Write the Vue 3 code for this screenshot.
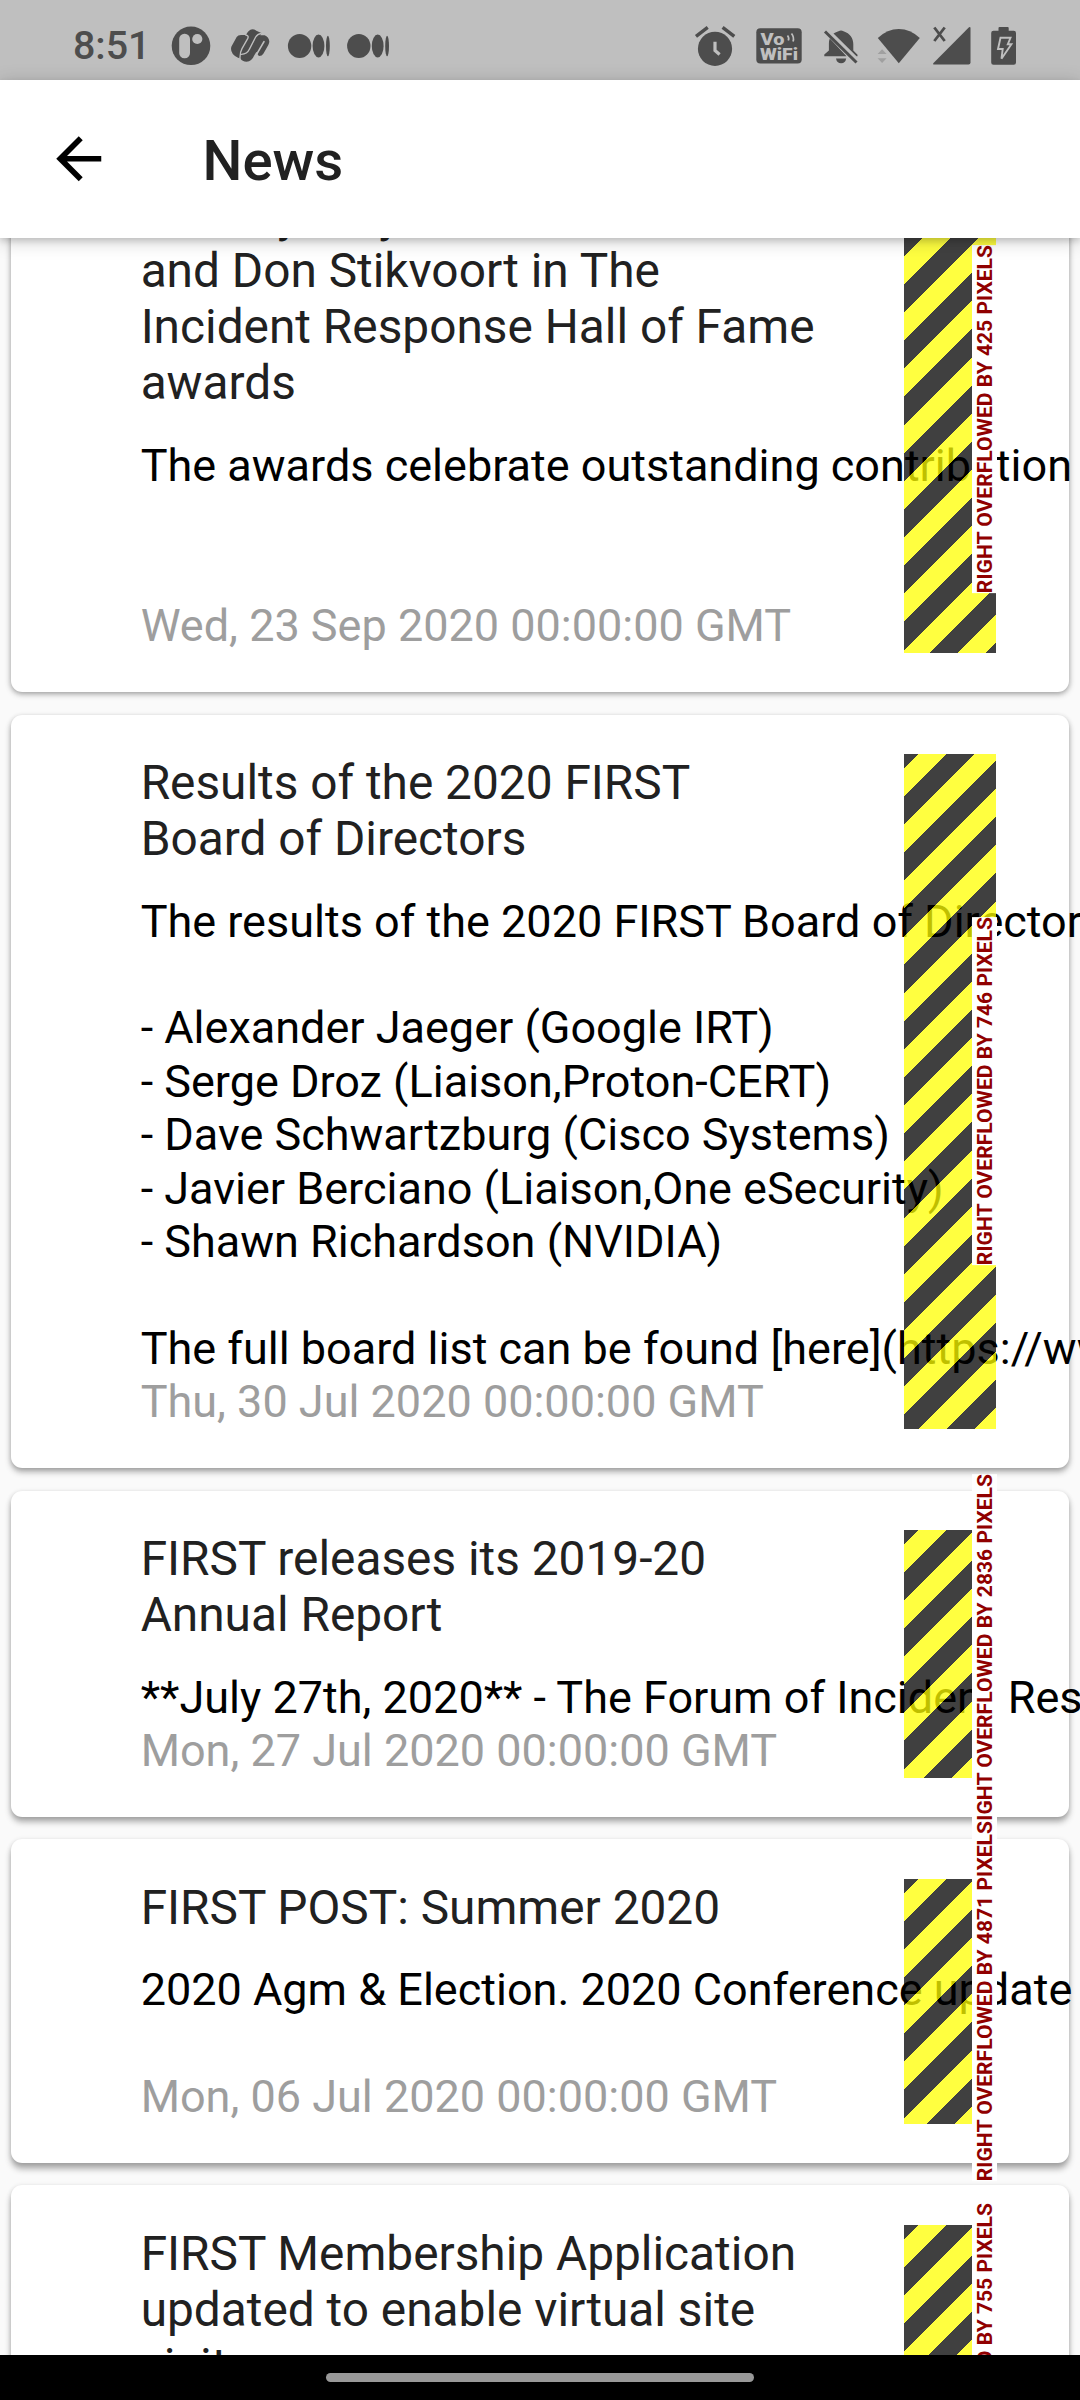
<script setup>
const articles = [
  {
    title: 'FIRST yearly\nand Don Stikvoort in The\nIncident Response Hall of Fame\nawards',
    body: 'The awards celebrate outstanding contribution\n\n\u00a0',
    date: 'Wed, 23 Sep 2020 00:00:00 GMT',
    overflow: 425,
    depth: 2,
  },
  {
    title: 'Results of the 2020 FIRST\nBoard of Directors',
    body: 'The results of the 2020 FIRST Board of Directors\n\n- Alexander Jaeger (Google IRT)\n- Serge Droz (Liaison,Proton-CERT)\n- Dave Schwartzburg (Cisco Systems)\n- Javier Berciano (Liaison,One eSecurity)\n- Shawn Richardson (NVIDIA)\n\nThe full board list can be found [here](https://www',
    date: 'Thu, 30 Jul 2020 00:00:00 GMT',
    overflow: 746,
    depth: 4,
  },
  {
    title: 'FIRST releases its 2019-20\nAnnual Report',
    body: '**July 27th, 2020** - The Forum of Incident Response',
    date: 'Mon, 27 Jul 2020 00:00:00 GMT',
    overflow: 2836,
    depth: 5,
  },
  {
    title: 'FIRST POST: Summer 2020',
    body: '2020 Agm & Election. 2020 Conference update\n\u00a0',
    date: 'Mon, 06 Jul 2020 00:00:00 GMT',
    overflow: 4871,
    depth: 6,
  },
  {
    title: 'FIRST Membership Application\nupdated to enable virtual site\nvisits',
    body: '\u00a0',
    date: '\u00a0',
    overflow: 755,
    depth: 6,
  },
]
</script>

<template>
  <div class="screen">
    <header class="status">
      <span class="clock">8:51</span>
      <svg class="status-icons" viewBox="160 0 920 80" width="920" height="80" fill="#4d4d4d">
        <circle cx="191" cy="45.8" r="19.3" />
        <rect x="179.2" y="33.8" width="10.8" height="24.5" rx="5.2" fill="#bfbfbf" />
        <circle cx="197.3" cy="39" r="5.1" fill="#bfbfbf" />

        <g transform="translate(220 20) scale(0.3333)">
          <path d="M34 80L50 51Q54 45 63 45H78Q85 30 97 28Q104 28 109 32L124 39L121 46H134Q146 50 148 64Q148 69 145 75L130 101Q126 108 118 108Q111 106 114 99L109 96L103 106Q95 125 80 125Q66 124 62 116Q45 110 38 101Q31 93 34 80Z" />
          <path d="M76 45Q88 46 83 56L66 86Q59 98 60 118M124 40Q112 42 107 51L88 88Q81 104 62 103" fill="none" stroke="#bfbfbf" stroke-width="4" />
          <path d="M132 65L111 101" fill="none" stroke="#bfbfbf" stroke-width="5" stroke-linecap="round" />
        </g>

        <g v-for="dx in [0, 59.2]" :key="dx" :transform="`translate(${dx} 0)`">
          <ellipse cx="299.6" cy="46" rx="11.7" ry="12.1" />
          <ellipse cx="318.5" cy="46" rx="5.9" ry="11.4" />
          <ellipse cx="327.9" cy="46" rx="1.9" ry="10.3" />
        </g>

        <circle cx="715" cy="48.8" r="17.1" />
        <path d="M696 36.3l11.7-9M734.3 36.3l-11.7-9" fill="none" stroke="#4d4d4d" stroke-width="3.4" />
        <path d="M715 41.8v8.7l4.6 4" fill="none" stroke="#bfbfbf" stroke-width="3.2" />

        <rect x="756.3" y="28.3" width="45.4" height="35.2" rx="4" />
        <g fill="#bfbfbf" class="vowifi">
          <text x="760.5" y="44.6" textLength="24" lengthAdjust="spacingAndGlyphs">Vo</text>
          <text x="760" y="60.3" textLength="38" lengthAdjust="spacingAndGlyphs">WiFi</text>
        </g>
        <path d="M787.5 35.5q2 2.5 .8 5M791.5 33.5q3 4 1.5 8" fill="none" stroke="#bfbfbf" stroke-width="1.7" />

        <path d="M833.5 33.6q2.5-1.8 5-2.4q2.500-1.600 5 0c6.500 2 9.800 7 9.800 13v6.300l4.200 4.200v1.600h-1zM829.800 38.500q-1 2.500-.9 5v7l-4.600 4v1.700h22.200z" />
        <path d="M836 58.600h10.200q-.800 4.700-5.100 4.700t-5.100-4.700z" />
        <path d="M825 31.500l31.500 31" fill="none" stroke="#4d4d4d" stroke-width="3" />

        <path d="M898.8 63.3L877.8 38q9.500-9 21-9t21 9z" />
        <path d="M877.6 54l4.500-4.800 4.500 4.800zM877.6 58.200h9l-4.500 4.800z" fill="#a0a0a0" />

        <path d="M934.3 27.5l10.400 13.500M944.700 27.500l-10.400 13.500" fill="none" stroke="#4d4d4d" stroke-width="2.8" />
        <path d="M933.5 64.500q-1-.300 0-1.600L969 27.300q1.400-.800 1.500 .700V62.500q0 2-2 2z" />

        <path d="M998.5 30.700V28q0-1 1-1h8.200q1 0 1 1v2.700h5q2.300 0 2.300 2.300v29.400q0 2.300-2.300 2.300h-20.200q-2.300 0-2.300-2.300V33q0-2.300 2.300-2.300z" />
        <path d="M1000.500 37.800h10l-2.700 6.400h3.600l-9.900 14.500 1.200-9.700h-4.700z" fill="none" stroke="#bfbfbf" stroke-width="1.9" />
      </svg>
    </header>

    <nav class="appbar">
      <svg class="back" viewBox="0 0 24 24" width="67.5" height="67.5">
        <path d="M20 11H7.83l5.59-5.59L12 4l-8 8 8 8 1.41-1.41L7.83 13H20v-2z" />
      </svg>
      <h1>News</h1>
    </nav>

    <main class="viewport">
      <div class="list">
        <article
          v-for="item in articles"
          :key="item.overflow"
          class="card"
          :style="{ '--depth': item.depth + 'px' }"
        >
          <div class="row">
            <h2>{{ item.title }}</h2>
            <p class="body">{{ item.body }}</p>
            <p class="date">{{ item.date }}</p>
            <div class="hazard">
              <span class="label">RIGHT OVERFLOWED BY {{ item.overflow }} PIXELS</span>
            </div>
          </div>
        </article>
      </div>
    </main>

    <footer class="navbar"><span class="pill"></span></footer>
  </div>
</template>

<style>
body {
  margin: 0;
}
</style>

<style scoped>
.screen {
  display: flex;
  flex-direction: column;
  width: 1080px;
  height: 2400px;
  overflow: hidden;
  background: #fafafa;
  font-family: Roboto, sans-serif;
}
.status {
  display: flex;
  flex: none;
  align-items: center;
  height: 80px;
  background: #bfbfbf;
}
.clock {
  width: 87px;
  padding: 11px 0 0 73px;
  color: #4d4d4d;
  font-size: 39.375px;
  font-weight: 500;
  line-height: 46px;
}
.status-icons {
  flex: none;
}
.vowifi {
  font: 900 17px Roboto, sans-serif;
}
.appbar {
  position: relative;
  z-index: 2;
  display: flex;
  flex: none;
  align-items: center;
  gap: 90px;
  box-sizing: border-box;
  height: 157.5px;
  padding-left: 45px;
  background: #fff;
  box-shadow: 0 3px 6px rgba(0, 0, 0, 0.14), 0 3px 18px rgba(0, 0, 0, 0.2);
}
h1 {
  margin: 5px 0 0;
  color: #212121;
  font-size: 56.25px;
  font-weight: 500;
}
.viewport {
  flex: 1;
  min-height: 0;
  overflow: hidden;
}
.list {
  display: flex;
  flex-direction: column;
  gap: 22.5px;
  margin-top: -91.1px;
  padding: 0 11.25px;
}
.card {
  padding: 39.375px 73.125px 39.375px 129.375px;
  border-radius: 11.25px;
  background: #fff;
  box-shadow: 0 var(--depth) 6px rgba(0, 0, 0, 0.3), 0 1px 5px rgba(0, 0, 0, 0.14);
}
.row {
  position: relative;
}
h2,
p {
  margin: 0;
  font-weight: 400;
  white-space: pre;
}
h2 {
  margin-bottom: 27.325px;
  padding-top: 0.8px;
  color: #212121;
  font-size: 47.8125px;
  line-height: 56.25px;
}
p {
  font-size: 45px;
  line-height: 53.4375px;
}
.body {
  color: #000;
}
.date {
  color: #9e9e9e;
}
.hazard {
  position: absolute;
  top: 0;
  right: 0;
  bottom: 0;
  display: flex;
  align-items: center;
  justify-content: flex-end;
  width: 91.2px;
  background: repeating-linear-gradient(
    135deg,
    rgba(0, 0, 0, 0.75) 0 9.944px,
    rgba(255, 255, 0, 0.75) 9.944px 29.831px,
    rgba(0, 0, 0, 0.75) 29.831px 39.775px
  );
}
.label {
  flex: none;
  margin-right: -1.3px;
  background: #fff;
  color: #900000;
  font-size: 21.09px;
  font-weight: 700;
  line-height: 25px;
  white-space: nowrap;
  writing-mode: vertical-rl;
  transform: rotate(180deg);
}
.navbar {
  position: relative;
  z-index: 2;
  display: flex;
  flex: none;
  justify-content: center;
  height: 45px;
  background: #000;
}
.pill {
  width: 428px;
  height: 9px;
  margin-top: 18px;
  border-radius: 5px;
  background: #999;
}
</style>
